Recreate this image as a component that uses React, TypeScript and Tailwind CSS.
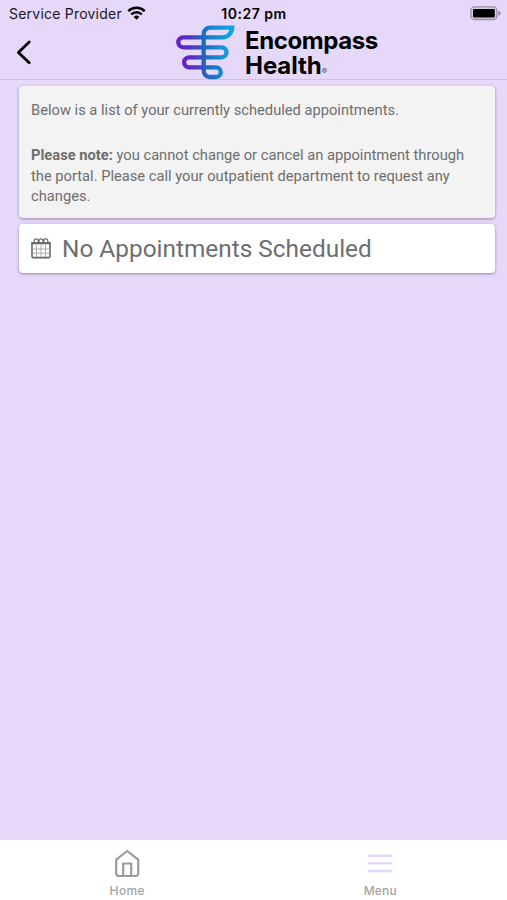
import type { ReactNode } from "react";

const StatusBar = () => (
  <div className="flex h-[26px] items-center justify-between pr-[6px] pl-[9px] text-[14px] text-[#1c1824]">
    <div className="flex w-[170px] items-center gap-[5px]">
      <span className="tracking-[0.22px] whitespace-nowrap">Service Provider</span>
      <svg className="h-[14px] w-[19px]" viewBox="0 0 19 14" fill="none" stroke="#000">
        <path d="M1.3 5.2a11.6 11.6 0 0 1 16.4 0" strokeWidth="2.5" />
        <path d="M4.2 8.4a7.5 7.5 0 0 1 10.6 0" strokeWidth="2.4" />
        <path d="M9.5 13.7 6.7 10.9a4 4 0 0 1 5.6 0z" fill="#000" stroke="none" />
      </svg>
    </div>
    <span className="mr-[2px] text-[14px] font-semibold tracking-[0.5px] whitespace-nowrap text-black">10:27 pm</span>
    <div className="flex w-[170px] justify-end">
      <svg className="h-[15px] w-[31px]" viewBox="0 0 31 15">
        <rect x="0.9" y="0.9" width="26" height="12.6" rx="3.6" fill="#d9cde8" stroke="#9b90a8" strokeWidth="1.3" />
        <rect x="3" y="2.9" width="21.8" height="8.6" rx="1.2" fill="#000" />
        <path d="M28.3 4.8c1.8.5 2.4 1.3 2.4 2.4s-.6 1.9-2.4 2.4z" fill="#9b90a8" />
      </svg>
    </div>
  </div>
);

const Logo = () => (
  <div className="flex items-start">
    <svg className="h-[56px] w-[60px]" viewBox="0 0 60 56" fill="none">
      <defs>
        <linearGradient id="brand" gradientUnits="userSpaceOnUse" x1="2" y1="30" x2="58" y2="20">
          <stop offset="0" stopColor="#6d1fc4" />
          <stop offset="0.25" stopColor="#5a2fc0" />
          <stop offset="0.48" stopColor="#1f68bd" />
          <stop offset="0.75" stopColor="#148fd4" />
          <stop offset="1" stopColor="#0aa6e4" />
        </linearGradient>
      </defs>
      <path
        d="M28.7 45V10a6.3 6.3 0 0 1 6.3-6.3H57.2C57 9 53 13.3 47.5 13.3H8.3a5 5 0 0 0 0 10H46.5a5 5 0 0 1 0 10H14.2a5 5 0 0 0 0 10.1H41a4.8 4.8 0 0 1 0 9.6H35a6.3 6.3 0 0 1-6.3-6.3z"
        stroke="url(#brand)"
        strokeWidth="4.3"
      />
    </svg>
    <div className="mt-[4px] ml-[10px] font-['Inter',sans-serif] text-[24px] leading-[25px] font-bold text-black">
      <div className="tracking-[-0.4px]">Encompass</div>
      <div className="flex items-baseline">
        <span className="tracking-[-0.05px]">Health</span>
        <span className="text-[8px] leading-none font-medium text-[#3d3745]">®</span>
      </div>
    </div>
  </div>
);

const Header = () => (
  <header className="flex h-[54px] items-start border-b border-[#cfc1e0]">
    <button type="button" aria-label="Back" className="mt-[14px] ml-[16px] w-[16px]">
      <svg className="h-[25px] w-[16px]" viewBox="0 0 16 25" fill="none">
        <path d="M13.2 2 2.4 12.4 13.2 22.8" stroke="#000" strokeWidth="2.8" strokeLinecap="round" strokeLinejoin="round" />
      </svg>
    </button>
    <div className="-mt-[2px] ml-[143px]">
      <Logo />
    </div>
  </header>
);

const Card = ({ className, children }: { className: string; children: ReactNode }) => (
  <section className={`rounded-[4px] px-[12px] text-[#6e6e6e] shadow-[0_1px_3px_rgba(60,40,90,0.45)] ${className}`}>
    {children}
  </section>
);

const CalendarIcon = () => (
  <svg className="h-[21px] w-[20px]" viewBox="0 0 20 21" fill="none" stroke="#666">
    <path d="M1 4V18.6q0 1 1 1H18q1 0 1-1V4" strokeWidth="1.6" />
    <path d="M1 5.2H19" strokeWidth="2.2" />
    <path d="M5.5 7v12M10 7v12M14.5 7v12M1.5 11H18.5M1.5 15.2H18.5" stroke="#aaa" strokeWidth="1" />
    <path d="M3.2 5V2.8a2 2 0 0 1 4 0V5M8 5V2.8a2 2 0 0 1 4 0V5M12.8 5V2.8a2 2 0 0 1 4 0V5" strokeWidth="1.2" />
  </svg>
);

const TabBar = () => (
  <nav className="flex h-[60px] bg-white font-['Inter',sans-serif] text-[12px] leading-[14px] font-medium text-[#a3a3a3]">
    <a href="#" className="flex flex-1 flex-col items-center pt-[9px]">
      <svg className="h-[30px] w-[28px]" viewBox="0 0 28 30" fill="none" stroke="#9b9b9b" strokeWidth="2.2">
        <path d="M3.2 10.6 14.2 2l11 8.6V24.5a2.5 2.5 0 0 1-2.5 2.5h-17a2.5 2.5 0 0 1-2.5-2.5z" strokeLinejoin="round" />
        <path d="M10.2 27V14.5h8V27" />
      </svg>
      <span className="mt-[5px] ml-px tracking-[0.35px]">Home</span>
    </a>
    <a href="#" className="flex flex-1 flex-col items-center pt-[9px]">
      <svg className="h-[30px] w-[28px]" viewBox="0 0 28 30" stroke="#e4d7f7" strokeWidth="2.4">
        <path d="M1.8 6.8h24.6M1.8 14.4h24.6M1.8 22h24.6" />
      </svg>
      <span className="mt-[5px] tracking-[0.15px]">Menu</span>
    </a>
  </nav>
);

export default function App() {
  return (
    <div className="flex h-[900px] w-[507px] flex-col overflow-hidden bg-[#e5d8f8] font-['Inter',sans-serif]">
      <StatusBar />
      <Header />
      <main className="flex flex-1 flex-col gap-[6px] pt-[6px] pr-[12px] pl-[19px] font-['Roboto',sans-serif]">
        <Card className="h-[132px] bg-[#f3f3f3] pt-[14px] text-[14.7px] leading-[20.8px]">
          <p>Below is a list of your currently scheduled appointments.</p>
          <p className="mt-[24px]">
            <b>Please note:</b> you cannot change or cancel an appointment through the portal. Please call your
            outpatient department to request any changes.
          </p>
        </Card>
        <Card className="flex h-[49px] items-center gap-[11px] bg-white">
          <CalendarIcon />
          <h1 className="pt-[2px] text-[24.4px]">No Appointments Scheduled</h1>
        </Card>
      </main>
      <TabBar />
    </div>
  );
}
